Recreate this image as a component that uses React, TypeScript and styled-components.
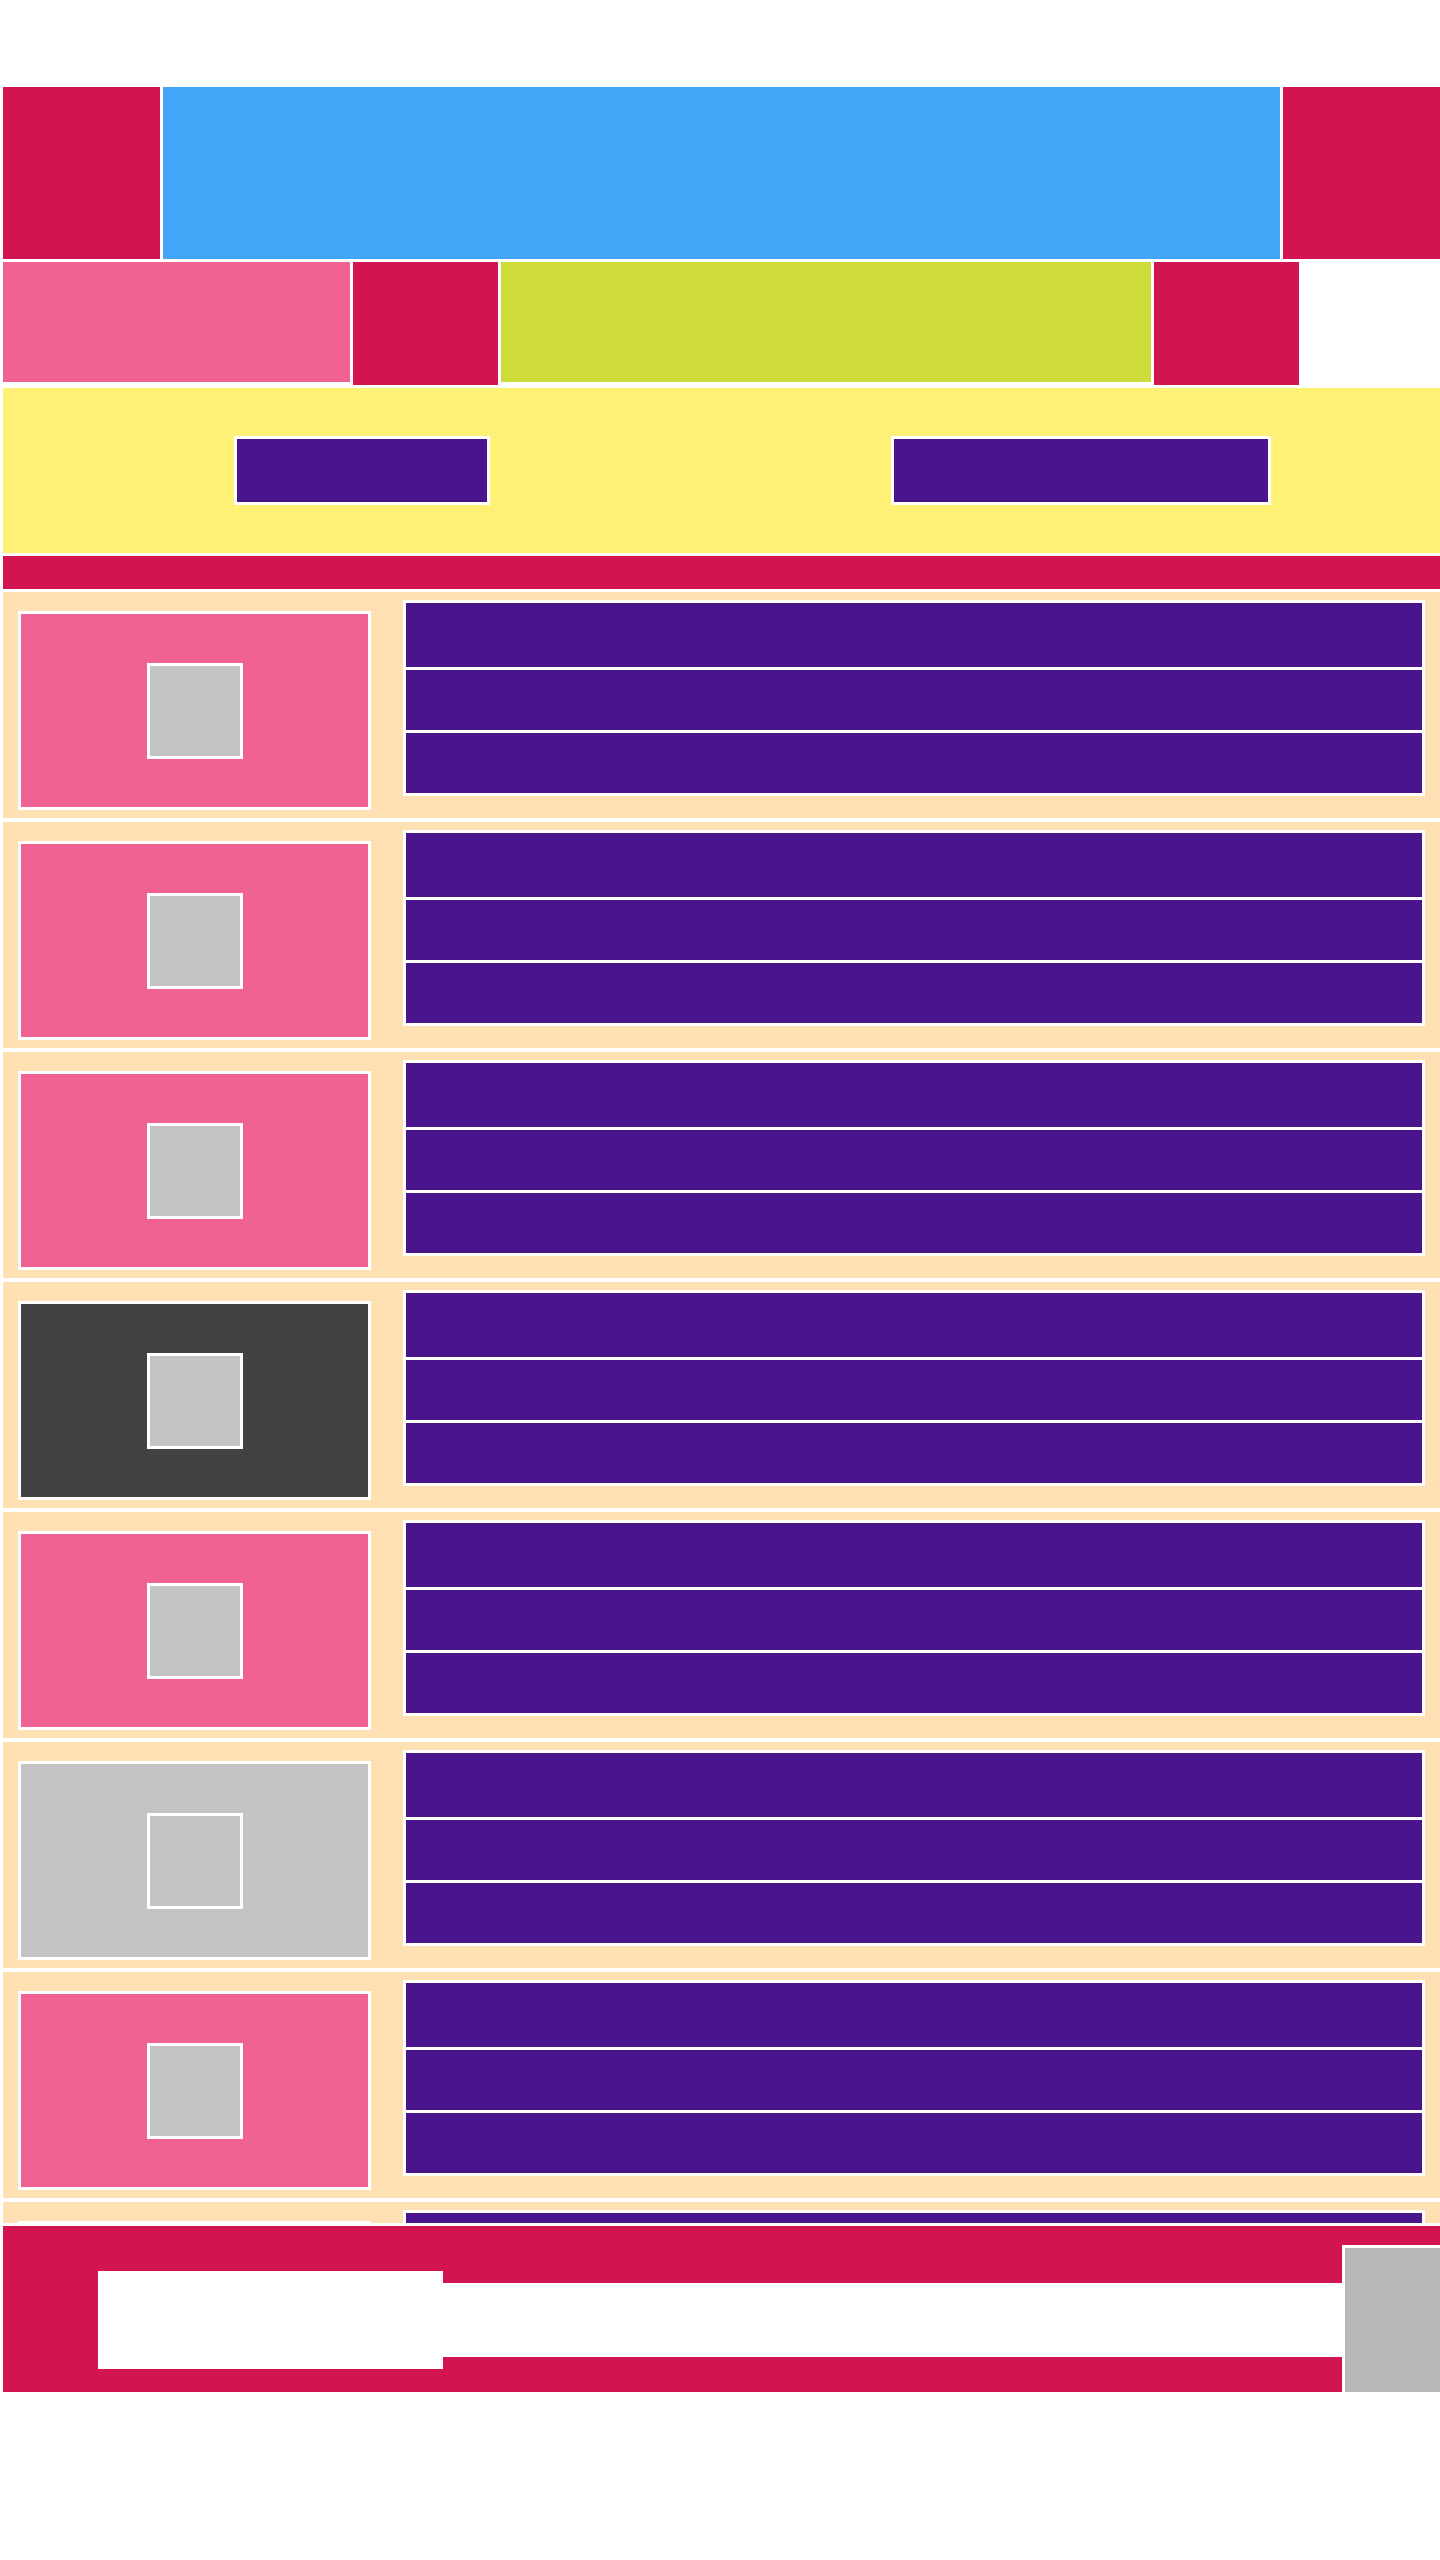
import React from 'react';
import styled, { createGlobalStyle } from 'styled-components';

const RED = '#d21451';
const BLUE = '#42a5f5';
const PINK = '#f06292';
const LIME = '#cddc39';
const YELLOW = '#fff176';
const PURPLE = '#4a148c';
const TAN = '#ffe0b2';
const GRAY = '#c4c4c4';
const DARK = '#424242';

const GlobalStyle = createGlobalStyle`
  body {
    margin: 0;
    background: #fff;
    font-family: 'Liberation Sans', Arial, sans-serif;
  }
  * {
    box-sizing: border-box;
  }
`;

const Page = styled.div`
  display: flex;
  flex-direction: column;
  gap: 3px;
  padding: 87px 0 0 3px;
  min-height: 2560px;
  background: #fff;
`;

const TopBar = styled.div`
  display: flex;
  gap: 3px;
  height: 172px;
`;

const Block = styled.div<{ $bg: string; $w?: number; $h?: number }>`
  background: ${(p) => p.$bg};
  width: ${(p) => (p.$w ? `${p.$w}px` : 'auto')};
  height: ${(p) => (p.$h ? `${p.$h}px` : '100%')};
  flex: ${(p) => (p.$w ? '0 0 auto' : '1')};
`;

const SubBar = styled.div`
  display: flex;
  align-items: flex-start;
  gap: 3px;
  height: 123px;
`;

const ActionStrip = styled.div`
  display: grid;
  grid-template-columns: 1fr 1fr;
  align-items: center;
  justify-items: center;
  height: 165px;
  background: ${YELLOW};
`;

const ActionButton = styled.button<{ $w: number }>`
  width: ${(p) => p.$w}px;
  height: 69px;
  border: 3px solid #fff;
  background: ${PURPLE};
  padding: 0;
  margin: 0;
  cursor: pointer;
  outline: none;
`;

const Divider = styled.div`
  height: 33px;
  background: ${RED};
`;

const List = styled.div`
  display: flex;
  flex-direction: column;
  gap: 4px;
  height: 1631px;
  overflow: hidden;
`;

const Card = styled.div`
  display: flex;
  align-items: flex-start;
  gap: 32px;
  flex-shrink: 0;
  height: 226px;
  padding: 0 15px;
  background: ${TAN};
`;

const Thumb = styled.div<{ $bg: string }>`
  display: flex;
  align-items: center;
  justify-content: center;
  flex-shrink: 0;
  width: 353px;
  height: 199px;
  margin-top: 19px;
  border: 3px solid #fff;
  background: ${(p) => p.$bg};
`;

const ThumbIcon = styled.div`
  width: 96px;
  height: 96px;
  border: 3px solid #fff;
  background: ${GRAY};
`;

const Lines = styled.div`
  display: flex;
  flex-direction: column;
  gap: 3px;
  flex: 1;
  margin-top: 8px;
  border: 3px solid #fff;
  background: #fff;
`;

const Line = styled.div<{ $h: number }>`
  height: ${(p) => p.$h}px;
  background: ${PURPLE};
`;

const Footer = styled.div`
  display: flex;
  align-items: flex-start;
  height: 166px;
  padding-left: 95px;
  background: ${RED};
  overflow: hidden;
`;

const FooterInput = styled.div`
  width: 345px;
  height: 98px;
  margin-top: 45px;
  background: #fff;
`;

const FooterTrack = styled.div`
  flex: 1;
  height: 74px;
  margin-top: 57px;
  background: #fff;
`;

const FooterThumb = styled.div`
  width: 98px;
  height: 147px;
  margin-top: 19px;
  border-top: 3px solid #fff;
  border-left: 3px solid #fff;
  background: #b8b8b8;
`;

const cards = [PINK, PINK, PINK, DARK, PINK, GRAY, PINK, PINK];

export default function App() {
  return (
    <>
      <GlobalStyle />
      <Page>
        <TopBar>
          <Block $bg={RED} $w={157} />
          <Block $bg={BLUE} />
          <Block $bg={RED} $w={157} />
        </TopBar>
        <SubBar>
          <Block $bg={PINK} $w={347} $h={120} />
          <Block $bg={RED} $w={145} $h={123} />
          <Block $bg={LIME} $w={650} $h={120} />
          <Block $bg={RED} $w={145} $h={123} />
        </SubBar>
        <ActionStrip>
          <ActionButton $w={256} />
          <ActionButton $w={380} />
        </ActionStrip>
        <Divider />
        <List>
          {cards.map((bg, i) => (
            <Card key={i}>
              <Thumb $bg={bg}>
                <ThumbIcon />
              </Thumb>
              <Lines>
                <Line $h={64} />
                <Line $h={60} />
                <Line $h={60} />
              </Lines>
            </Card>
          ))}
        </List>
        <Footer>
          <FooterInput />
          <FooterTrack />
          <FooterThumb />
        </Footer>
      </Page>
    </>
  );
}
